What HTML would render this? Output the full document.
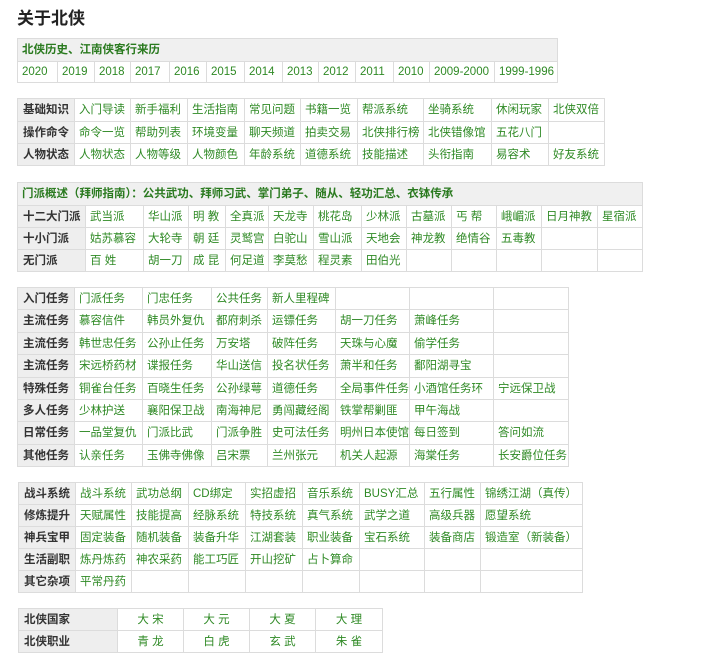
<!DOCTYPE html>
<html><head><meta charset="utf-8"><style>
body{margin:0;background:#fff;width:720px;height:659px;overflow:hidden;position:relative;font-family:"Liberation Sans","Noto Sans CJK SC",sans-serif;font-size:11.5px;}
h1{position:absolute;left:17px;top:4px;margin:0;font-size:17px;font-weight:bold;color:#222;}
table{position:absolute;border-collapse:collapse;table-layout:fixed;}
td{border:1px solid #dcdcdc;padding:0 0 0 4px;color:#2f8a25;white-space:nowrap;overflow:hidden;line-height:14px;}
td.l{background:#eeeeee;color:#333;font-weight:bold;padding-left:5px;}
td.h{background:#f0f0f0;color:#2a7a1f;font-weight:bold;}
td.c{text-align:center;padding:0;}
</style></head><body>
<h1>关于北侠</h1>

<table style="left:17px;top:38px;width:540px">
<colgroup><col style="width:40px"><col style="width:37px"><col style="width:36px"><col style="width:39px"><col style="width:37px"><col style="width:38px"><col style="width:38px"><col style="width:36px"><col style="width:37px"><col style="width:38px"><col style="width:36px"><col style="width:65px"><col style="width:63px"></colgroup>
<tr style="height:23px"><td class="h" colspan="13">北侠历史、江南侠客行来历</td></tr>
<tr style="height:21px"><td>2020</td><td>2019</td><td>2018</td><td>2017</td><td>2016</td><td>2015</td><td>2014</td><td>2013</td><td>2012</td><td>2011</td><td>2010</td><td>2009-2000</td><td>1999-1996</td></tr>
</table>

<table style="left:17px;top:98px;width:587px">
<colgroup><col style="width:57px"><col style="width:56px"><col style="width:57px"><col style="width:57px"><col style="width:56px"><col style="width:57px"><col style="width:66px"><col style="width:68px"><col style="width:57px"><col style="width:56px"></colgroup>
<tr style="height:23px"><td class="l">基础知识</td><td>入门导读</td><td>新手福利</td><td>生活指南</td><td>常见问题</td><td>书籍一览</td><td>帮派系统</td><td>坐骑系统</td><td>休闲玩家</td><td>北侠双倍</td></tr>
<tr style="height:22px"><td class="l">操作命令</td><td>命令一览</td><td>帮助列表</td><td>环境变量</td><td>聊天频道</td><td>拍卖交易</td><td>北侠排行榜</td><td>北侠错像馆</td><td>五花八门</td><td></td></tr>
<tr style="height:22px"><td class="l">人物状态</td><td>人物状态</td><td>人物等级</td><td>人物颜色</td><td>年龄系统</td><td>道德系统</td><td>技能描述</td><td>头衔指南</td><td>易容术</td><td>好友系统</td></tr>
</table>

<table style="left:17px;top:182px;width:625px">
<colgroup><col style="width:68px"><col style="width:58px"><col style="width:45px"><col style="width:37px"><col style="width:43px"><col style="width:45px"><col style="width:48px"><col style="width:45px"><col style="width:45px"><col style="width:45px"><col style="width:45px"><col style="width:56px"><col style="width:45px"></colgroup>
<tr style="height:23px"><td class="h" colspan="13">门派概述（拜师指南）：公共武功、拜师习武、掌门弟子、随从、轻功汇总、衣钵传承</td></tr>
<tr style="height:22px"><td class="l">十二大门派</td><td>武当派</td><td>华山派</td><td>明 教</td><td>全真派</td><td>天龙寺</td><td>桃花岛</td><td>少林派</td><td>古墓派</td><td>丐 帮</td><td>峨嵋派</td><td>日月神教</td><td>星宿派</td></tr>
<tr style="height:22px"><td class="l">十小门派</td><td>姑苏慕容</td><td>大轮寺</td><td>朝 廷</td><td>灵鹫宫</td><td>白驼山</td><td>雪山派</td><td>天地会</td><td>神龙教</td><td>绝情谷</td><td>五毒教</td><td></td><td></td></tr>
<tr style="height:22px"><td class="l">无门派</td><td>百 姓</td><td>胡一刀</td><td>成 昆</td><td>何足道</td><td>李莫愁</td><td>程灵素</td><td>田伯光</td><td></td><td></td><td></td><td></td><td></td></tr>
</table>

<table style="left:17px;top:287px;width:551px">
<colgroup><col style="width:57px"><col style="width:68px"><col style="width:69px"><col style="width:56px"><col style="width:68px"><col style="width:74px"><col style="width:84px"><col style="width:75px"></colgroup>
<tr style="height:22px"><td class="l">入门任务</td><td>门派任务</td><td>门忠任务</td><td>公共任务</td><td>新人里程碑</td><td></td><td></td><td></td></tr>
<tr style="height:23px"><td class="l">主流任务</td><td>慕容信件</td><td>韩员外复仇</td><td>都府刺杀</td><td>运镖任务</td><td>胡一刀任务</td><td>萧峰任务</td><td></td></tr>
<tr style="height:22px"><td class="l">主流任务</td><td>韩世忠任务</td><td>公孙止任务</td><td>万安塔</td><td>破阵任务</td><td>天珠与心魔</td><td>偷学任务</td><td></td></tr>
<tr style="height:23px"><td class="l">主流任务</td><td>宋远桥药材</td><td>谍报任务</td><td>华山送信</td><td>投名状任务</td><td>萧半和任务</td><td>鄱阳湖寻宝</td><td></td></tr>
<tr style="height:22px"><td class="l">特殊任务</td><td>铜雀台任务</td><td>百晓生任务</td><td>公孙绿萼</td><td>道德任务</td><td>全局事件任务</td><td>小酒馆任务环</td><td>宁远保卫战</td></tr>
<tr style="height:22px"><td class="l">多人任务</td><td>少林护送</td><td>襄阳保卫战</td><td>南海神尼</td><td>勇闯藏经阁</td><td>铁掌帮剿匪</td><td>甲午海战</td><td></td></tr>
<tr style="height:23px"><td class="l">日常任务</td><td>一品堂复仇</td><td>门派比武</td><td>门派争胜</td><td>史可法任务</td><td>明州日本使馆</td><td>每日签到</td><td>答问如流</td></tr>
<tr style="height:22px"><td class="l">其他任务</td><td>认亲任务</td><td>玉佛寺佛像</td><td>吕宋票</td><td>兰州张元</td><td>机关人起源</td><td>海棠任务</td><td>长安爵位任务</td></tr>
</table>

<table style="left:18px;top:482px;width:564px">
<colgroup><col style="width:57px"><col style="width:56px"><col style="width:57px"><col style="width:57px"><col style="width:57px"><col style="width:57px"><col style="width:65px"><col style="width:56px"><col style="width:102px"></colgroup>
<tr style="height:22px"><td class="l">战斗系统</td><td>战斗系统</td><td>武功总纲</td><td>CD绑定</td><td>实招虚招</td><td>音乐系统</td><td>BUSY汇总</td><td>五行属性</td><td>锦绣江湖（真传）</td></tr>
<tr style="height:22px"><td class="l">修炼提升</td><td>天赋属性</td><td>技能提高</td><td>经脉系统</td><td>特技系统</td><td>真气系统</td><td>武学之道</td><td>高级兵器</td><td>愿望系统</td></tr>
<tr style="height:22px"><td class="l">神兵宝甲</td><td>固定装备</td><td>随机装备</td><td>装备升华</td><td>江湖套装</td><td>职业装备</td><td>宝石系统</td><td>装备商店</td><td>锻造室（新装备）</td></tr>
<tr style="height:22px"><td class="l">生活副职</td><td>炼丹炼药</td><td>神农采药</td><td>能工巧匠</td><td>开山挖矿</td><td>占卜算命</td><td></td><td></td><td></td></tr>
<tr style="height:22px"><td class="l">其它杂项</td><td>平常丹药</td><td></td><td></td><td></td><td></td><td></td><td></td><td></td></tr>
</table>

<table style="left:18px;top:608px;width:364px">
<colgroup><col style="width:99px"><col style="width:66px"><col style="width:66px"><col style="width:66px"><col style="width:67px"></colgroup>
<tr style="height:22px"><td class="l">北侠国家</td><td class="c">大 宋</td><td class="c">大 元</td><td class="c">大 夏</td><td class="c">大 理</td></tr>
<tr style="height:22px"><td class="l">北侠职业</td><td class="c">青 龙</td><td class="c">白 虎</td><td class="c">玄 武</td><td class="c">朱 雀</td></tr>
</table>
</body></html>
